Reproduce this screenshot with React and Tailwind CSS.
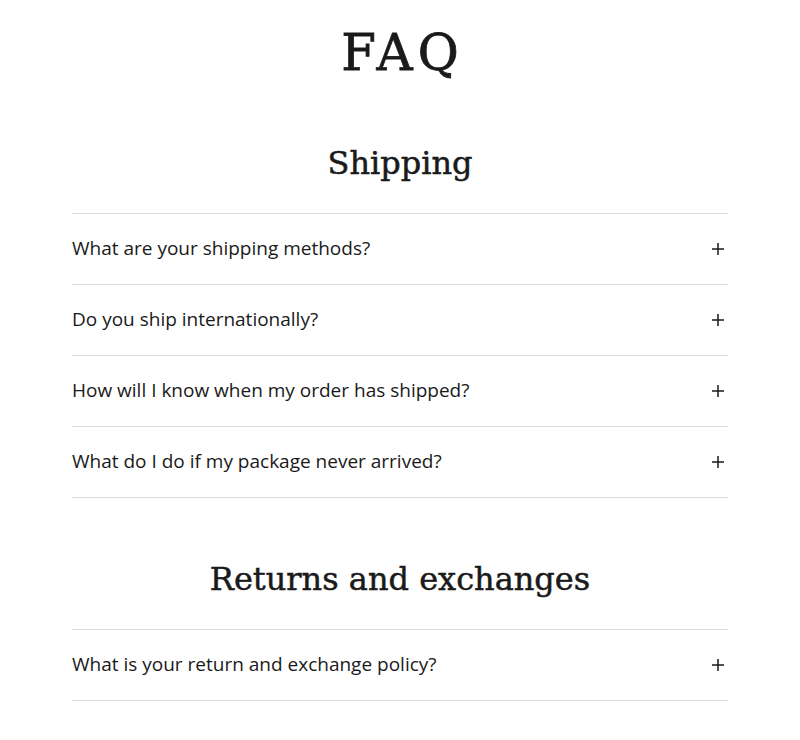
import React from 'react';

const sections = [
  {
    title: 'Shipping',
    items: [
      'What are your shipping methods?',
      'Do you ship internationally?',
      'How will I know when my order has shipped?',
      'What do I do if my package never arrived?',
    ],
  },
  {
    title: 'Returns and exchanges',
    items: ['What is your return and exchange policy?'],
  },
];

function PlusIcon() {
  return (
    <svg width="14" height="14" viewBox="0 0 14 14" className="shrink-0">
      <path d="M7 1v12M1 7h12" stroke="#1a1a1a" strokeWidth="1.5" />
    </svg>
  );
}

export default function App() {
  return (
    <div className="min-h-screen bg-white text-[#1a1a1a]">
      <div className="mx-auto w-[656px] pt-[18px]">
        <h1 className="text-center text-[50px] leading-[70px] tracking-[5px] pl-[5px] font-['DejaVu_Serif',serif] [-webkit-text-stroke:0.8px]">
          FAQ
        </h1>
        {sections.map((s, i) => (
          <section key={s.title} className={i === 0 ? 'mt-[53px]' : 'mt-[59px]'}>
            <h2 className="text-center text-[32px] leading-[44px] font-['DejaVu_Serif',serif] mb-[28px] [-webkit-text-stroke:0.5px]">
              {s.title}
            </h2>
            <ul className="border-t border-[#dcdcdc]">
              {s.items.map((q) => (
                <li
                  key={q}
                  className="flex h-[71px] items-center justify-between border-b border-[#dcdcdc] pr-[3px] font-['Open_Sans',sans-serif] text-[19px]"
                >
                  <span className="-mt-[2px]">{q}</span>
                  <PlusIcon />
                </li>
              ))}
            </ul>
          </section>
        ))}
      </div>
    </div>
  );
}
